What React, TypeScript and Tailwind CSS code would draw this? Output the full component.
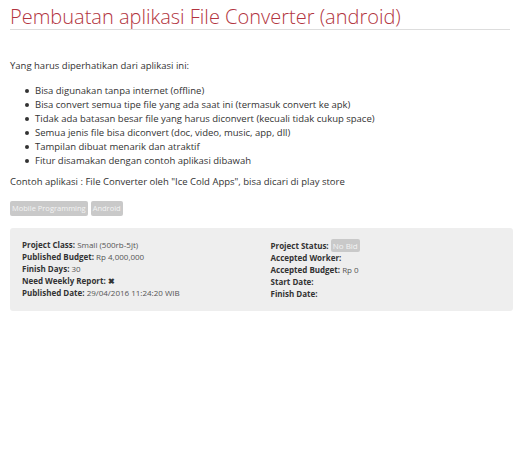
import React from 'react';

const requirements = [
  'Bisa digunakan tanpa internet (offline)',
  'Bisa convert semua tipe file yang ada saat ini (termasuk convert ke apk)',
  'Tidak ada batasan besar file yang harus diconvert (kecuali tidak cukup space)',
  'Semua jenis file bisa diconvert (doc, video, music, app, dll)',
  'Tampilan dibuat menarik dan atraktif',
  'Fitur disamakan dengan contoh aplikasi dibawah',
];

export default function App() {
  return (
    <div className="w-[526px] h-[465px] bg-white text-[#333] font-['Open_Sans',sans-serif]">
      <div className="px-[10px] pt-[5px]">
        {/* Title */}
        <h1 className="text-[20px] font-light text-[#b23440] leading-[23px] pb-[1px] border-b border-[#dddddd] mr-[6px]">
          Pembuatan aplikasi File Converter (android)
        </h1>

        {/* Description */}
        <div className="mt-[29px] text-[9.5px] leading-[14px]">
          <p>Yang harus diperhatikan dari aplikasi ini:</p>
          <ul className="mt-[11px] mb-[7px] pl-[15px]">
            {requirements.map((r) => (
              <li key={r} className="flex items-center gap-[6px]">
                <span className="w-[4px] h-[4px] rounded-full bg-[#333] shrink-0" />
                {r}
              </li>
            ))}
          </ul>
          <p>Contoh aplikasi : File Converter oleh "Ice Cold Apps", bisa dicari di play store</p>
        </div>

        {/* Tags */}
        <div className="flex gap-[3px] mt-[12px]">
          <span className="bg-[#c9c9c9] text-[#f4f4f4] text-[7.5px] leading-[15px] px-[2px] rounded-[2px]">Mobile Programming</span>
          <span className="bg-[#c9c9c9] text-[#f4f4f4] text-[7.5px] leading-[15px] px-[2px] rounded-[2px]">Android</span>
        </div>

        {/* Project info */}
        <div className="mt-[12px] mr-[3px] bg-[#eeeeee] rounded-[3px] px-[12px] pt-[11px] pb-[11px] grid grid-cols-2 text-[8px] leading-[12px] text-[#555]">
          <div>
            <div><b className="font-bold text-[#333]">Project Class:</b> Small (500rb-5jt)</div>
            <div><b className="font-bold text-[#333]">Published Budget:</b> Rp 4,000,000</div>
            <div><b className="font-bold text-[#333]">Finish Days:</b> 30</div>
            <div><b className="font-bold text-[#333]">Need Weekly Report:</b> <span className="font-bold text-[#333]">✖</span></div>
            <div><b className="font-bold text-[#333]">Published Date:</b> 29/04/2016 11:24:20 WIB</div>
          </div>
          <div className="pl-[9px]">
            <div>
              <b className="font-bold text-[#333]">Project Status:</b>{' '}
              <span className="bg-[#c9c9c9] text-[#f4f4f4] px-[2px] rounded-[2px] inline-block leading-[13px]">No Bid</span>
            </div>
            <div><b className="font-bold text-[#333]">Accepted Worker:</b></div>
            <div><b className="font-bold text-[#333]">Accepted Budget:</b> Rp 0</div>
            <div><b className="font-bold text-[#333]">Start Date:</b></div>
            <div><b className="font-bold text-[#333]">Finish Date:</b></div>
          </div>
        </div>
      </div>
    </div>
  );
}
